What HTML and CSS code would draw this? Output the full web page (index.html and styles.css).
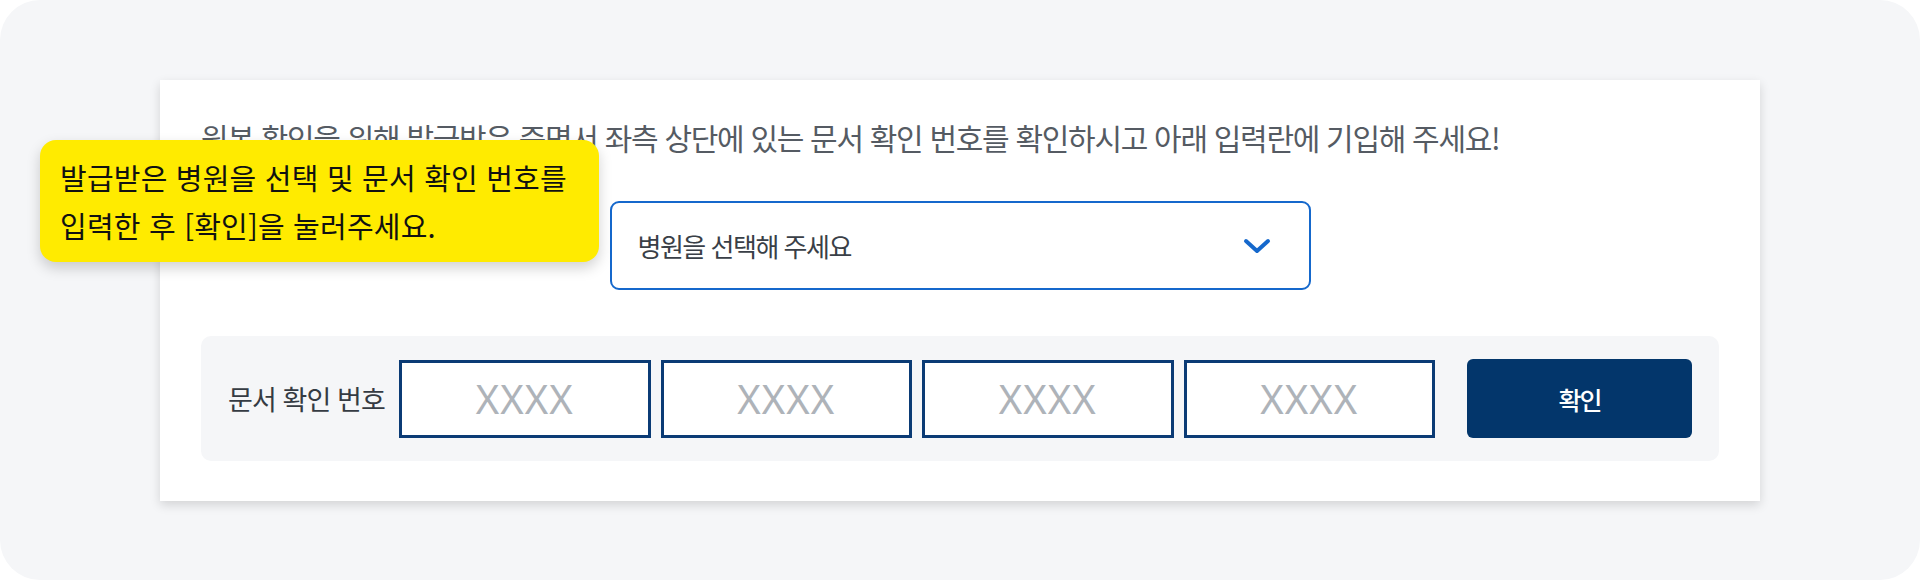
FILE: index.html
```html
<!DOCTYPE html>
<html lang="ko">
<head>
    <meta charset="UTF-8">
    <meta name="viewport" content="width=device-width, initial-scale=1.0">
    <title>문서 확인</title>
    <link rel="stylesheet" href="styles.css">
</head>
<body>

    <div class="page">
        <!-- Guide tooltip shown over the card -->
        <div class="tooltip">
            발급받은 병원을 선택 및 문서 확인 번호를<br>
            입력한 후 [확인]을 눌러주세요.
        </div>

        <div class="card">
            <p class="desc">원본 확인을 위해 발급받은 증명서 좌측 상단에 있는 문서 확인 번호를 확인하시고 아래 입력란에 기입해 주세요!</p>

            <!-- Hospital select box -->
            <div class="select-box">
                <span>병원을 선택해 주세요</span>
                <svg class="chevron" width="28" height="18" viewBox="0 0 28 18">
                    <polyline points="3,4 14,14 25,4" fill="none" stroke="#1568cc" stroke-width="4" stroke-linecap="round" stroke-linejoin="round"/>
                </svg>
            </div>

            <!-- Document number inputs -->
            <form class="code-panel" id="codeForm">
                <label class="code-label">문서 확인 번호</label>
                <div class="code-inputs">
                    <input type="text" maxlength="4" placeholder="XXXX">
                    <input type="text" maxlength="4" placeholder="XXXX">
                    <input type="text" maxlength="4" placeholder="XXXX">
                    <input type="text" maxlength="4" placeholder="XXXX">
                </div>
                <button type="submit" class="confirm-btn">확인</button>
            </form>
        </div>
    </div>

</body>
</html>
```

FILE: styles.css
```css
/* Basic reset */
* {
    margin: 0;
    padding: 0;
    box-sizing: border-box;
    font-family: "Noto Sans CJK KR", "Noto Sans", sans-serif;
}

body {
    background: #ffffff;
    width: 1920px;
    height: 580px;
    overflow: hidden;
}

/* Light grey rounded frame */
.page {
    position: relative;
    height: 580px;
    background: #f5f6f8;
    border-radius: 40px;
    padding: 80px 160px;
}

/* Yellow guide bubble */
.tooltip {
    position: absolute;
    left: 40px;
    top: 140px;
    width: 559px;
    height: 122px;
    padding: 13px 20px;
    background: #ffeb00;
    border-radius: 16px;
    box-shadow: 0px 6px 14px rgba(0, 0, 0, 0.18);
    color: #111111;
    font-size: 29px;
    line-height: 48px;
    letter-spacing: 0.2px;
    white-space: nowrap;
    z-index: 2;
}

/* Main white card */
.card {
    background: white;
    padding: 37px 41px 40px;
    box-shadow: 0px 4px 10px rgba(0, 0, 0, 0.14);
}

.desc {
    font-size: 30px;
    line-height: 40px;
    letter-spacing: -1.3px;
    color: #555b63;
    white-space: nowrap;
}

/* Fake select */
.select-box {
    width: 701px;
    height: 89px;
    margin: 44px auto 0;
    border: 2px solid #1568cc;
    border-radius: 9px;
    display: flex;
    align-items: center;
    justify-content: space-between;
    padding: 0 38px 0 26px;
    font-size: 26px;
    letter-spacing: -1.5px;
    color: #3a3f47;
}

.chevron {
    display: block;
}

/* Grey panel with code inputs */
.code-panel {
    margin-top: 46px;
    background: #f5f6f8;
    border-radius: 10px;
    padding: 23px 27px;
    display: flex;
    align-items: center;
}

.code-label {
    flex: none;
    width: 159px;
    margin-right: 12px;
    font-size: 27px;
    letter-spacing: -0.9px;
    color: #353b43;
    white-space: nowrap;
}

.code-inputs {
    flex: 1;
    min-width: 0;
    display: flex;
    gap: 10px;
}

.code-inputs input {
    flex: 1;
    width: 0;
    min-width: 0;
    height: 78px;
    border: 3px solid #0b3b75;
    background: white;
    text-align: center;
    font-family: "Noto Sans", sans-serif;
    font-size: 40px;
    letter-spacing: 1px;
    color: #333;
    outline: none;
}

.code-inputs input::placeholder {
    color: #aeb3b9;
}

.confirm-btn {
    flex: none;
    width: 225px;
    height: 79px;
    margin-left: 32px;
    background: #03366b;
    color: white;
    border: none;
    border-radius: 6px;
    font-size: 25px;
    font-weight: 500;
    letter-spacing: -2px;
    cursor: pointer;
}

.confirm-btn:hover {
    background: #022a54;
}
```
